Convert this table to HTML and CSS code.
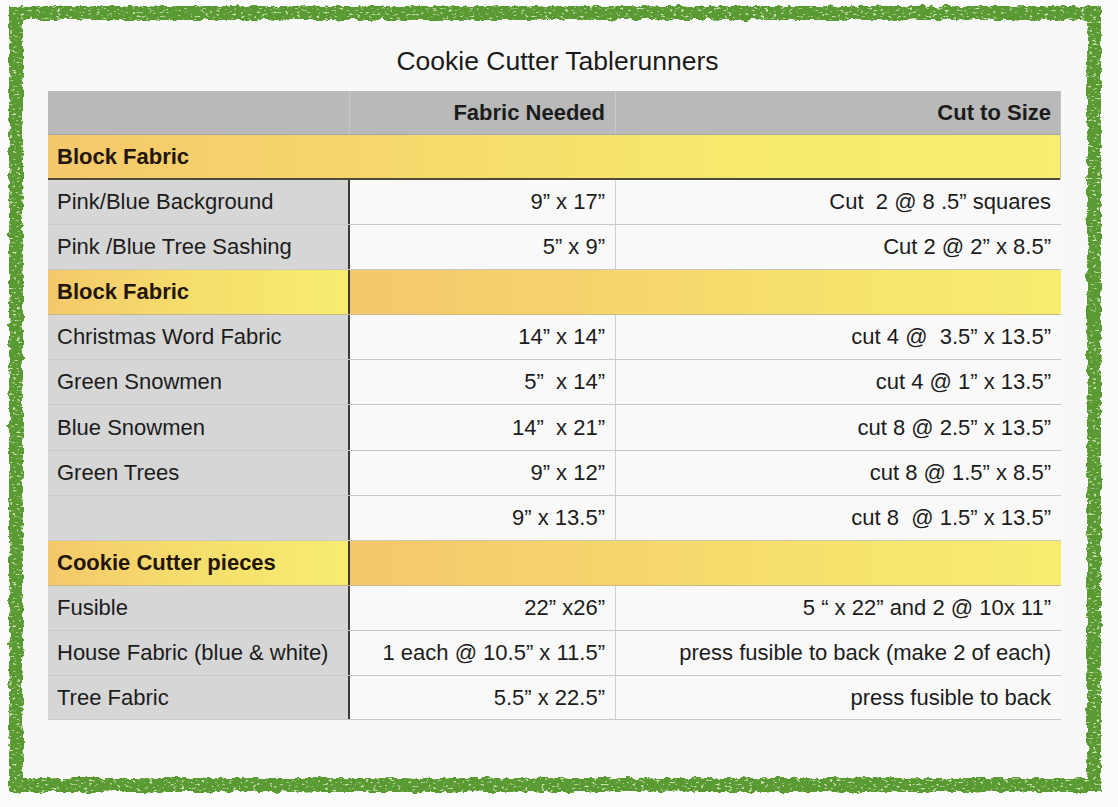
FILE: index.html
```html
<!DOCTYPE html>
<html>
<head>
<meta charset="utf-8">
<link rel="stylesheet" href="styles.css">
</head>
<body>
<svg class="defs" width="0" height="0" aria-hidden="true">
  <filter id="rough" x="-5%" y="-5%" width="110%" height="110%">
    <feTurbulence type="fractalNoise" baseFrequency="0.12" numOctaves="3" seed="3" result="noise"/>
    <feDisplacementMap in="SourceGraphic" in2="noise" scale="6" xChannelSelector="R" yChannelSelector="G" result="disp"/>
    <feTurbulence type="fractalNoise" baseFrequency="0.25 0.5" numOctaves="2" seed="9" result="speck"/>
    <feColorMatrix in="speck" type="matrix" values="0 0 0 0 0.60  0 0 0 0 0.78  0 0 0 0 0.42  0 0 0 7 -4.3" result="lite"/>
    <feComposite in="lite" in2="disp" operator="in" result="liteIn"/>
    <feMerge><feMergeNode in="disp"/><feMergeNode in="liteIn"/></feMerge>
  </filter>
</svg>
<div class="frame">
  <h1 class="title">Cookie Cutter Tablerunners</h1>
  <div class="table">
    <div class="row head">
      <div class="c c1"></div>
      <div class="c c2">Fabric Needed</div>
      <div class="c c3">Cut to Size</div>
    </div>
    <div class="row section first">
      <div class="c c1">Block Fabric</div>
      <div class="c c2"></div>
      <div class="c c3"></div>
    </div>
    <div class="row">
      <div class="c c1">Pink/Blue Background</div>
      <div class="c c2">9” x 17”</div>
      <div class="c c3">Cut&nbsp; 2 @ 8 .5” squares</div>
    </div>
    <div class="row">
      <div class="c c1">Pink /Blue Tree Sashing</div>
      <div class="c c2">5” x 9”</div>
      <div class="c c3">Cut 2 @ 2” x 8.5”</div>
    </div>
    <div class="row section split">
      <div class="c c1">Block Fabric</div>
      <div class="c rest"></div>
    </div>
    <div class="row">
      <div class="c c1">Christmas Word Fabric</div>
      <div class="c c2">14” x 14”</div>
      <div class="c c3">cut 4 @&nbsp; 3.5” x 13.5”</div>
    </div>
    <div class="row">
      <div class="c c1">Green Snowmen</div>
      <div class="c c2">5”&nbsp; x 14”</div>
      <div class="c c3">cut 4 @ 1” x 13.5”</div>
    </div>
    <div class="row tall">
      <div class="c c1">Blue Snowmen</div>
      <div class="c c2">14”&nbsp; x 21”</div>
      <div class="c c3">cut 8 @ 2.5” x 13.5”</div>
    </div>
    <div class="row">
      <div class="c c1">Green Trees</div>
      <div class="c c2">9” x 12”</div>
      <div class="c c3">cut 8 @ 1.5” x 8.5”</div>
    </div>
    <div class="row">
      <div class="c c1"></div>
      <div class="c c2">9” x 13.5”</div>
      <div class="c c3">cut 8&nbsp; @ 1.5” x 13.5”</div>
    </div>
    <div class="row section split">
      <div class="c c1">Cookie Cutter pieces</div>
      <div class="c rest"></div>
    </div>
    <div class="row">
      <div class="c c1">Fusible</div>
      <div class="c c2">22” x26”</div>
      <div class="c c3">5 “ x 22” and 2 @ 10x 11”</div>
    </div>
    <div class="row">
      <div class="c c1">House Fabric (blue &amp; white)</div>
      <div class="c c2">1 each @ 10.5” x 11.5”</div>
      <div class="c c3">press fusible to back (make 2 of each)</div>
    </div>
    <div class="row last">
      <div class="c c1">Tree Fabric</div>
      <div class="c c2">5.5” x 22.5”</div>
      <div class="c c3">press fusible to back</div>
    </div>
  </div>
</div>
</body>
</html>
```

FILE: styles.css
```css
* { box-sizing: border-box; }
html, body { margin: 0; padding: 0; }
body {
  background: #fbfbfb;
  font-family: "Liberation Sans", Arial, sans-serif;
  color: #1c1c1c;
  width: 1118px;
  height: 807px;
  overflow: hidden;
}
.defs { position: absolute; width: 0; height: 0; }
.frame {
  position: relative;
  margin: 6px 0 0 9px;
  width: 1092px;
  height: 786px;
  background: #f8f8f8;
  padding: 39px 0 0 39px;
}
.frame::before {
  content: "";
  position: absolute;
  inset: 0;
  border: 14px solid #5a9a31;
  filter: url(#rough);
  pointer-events: none;
}
.title {
  margin: 0 0 14px 0;
  width: 1013px;
  text-align: center;
  font-weight: normal;
  font-size: 26.5px;
  line-height: 32px;
  color: #1a1a1a;
  padding-left: 6px;
}
.table {
  width: 1013px;
  border-right: 1px solid #c4c4c4;
}
.row {
  display: grid;
  grid-template-columns: 302px 266px 445px;
  height: 45px;
  border-bottom: 1px solid #c8c8c8;
}
.row.tall { height: 46px; }
.c {
  display: flex;
  align-items: center;
  padding: 0 10px;
  font-size: 22px;
  white-space: nowrap;
}
.c1 {
  background: #d6d6d6;
  border-right: 2px solid #3a3a3a;
  padding-left: 9px;
}
.c2 {
  background: #f9f9f9;
  justify-content: flex-end;
  border-right: 1px solid #cfcfcf;
}
.c3 {
  background: #f9f9f9;
  justify-content: flex-end;
}
.head { height: 44px; background: #b9b9b9; border-bottom: 1px solid #a8a8a8; }
.head .c { background: transparent; font-weight: bold; }
.head .c1 { border-right: 1px solid #c8c8c8; }
.head .c2 { border-right: 1px solid #c8c8c8; }
.section .c { font-weight: bold; color: #22160c; }
.section.first {
  background: linear-gradient(90deg, #f4c86a 0%, #f6d96c 35%, #f7ea6e 70%, #f7ee72 100%);
  border-bottom: 2px solid #4e4a3a;
}
.section.first .c { background: transparent; border-right: none; }
.section.split { border-bottom: 1px solid #c9b98a; }
.section.split .c1 {
  background: linear-gradient(90deg, #f4c86a 0%, #f6dd6c 45%, #f7ec70 100%);
}
.section.split .rest {
  grid-column: 2 / 4;
  background: linear-gradient(90deg, #f4c76c 0%, #f6d66c 40%, #f7e56e 75%, #f7ec70 100%);
}
.last { height: 44px; }
```
